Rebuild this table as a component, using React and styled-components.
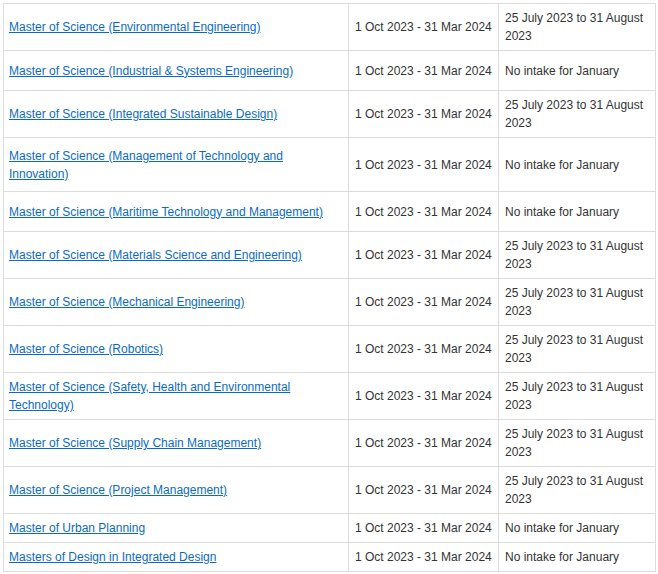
import React from 'react';
import styled, {createGlobalStyle} from "styled-components";

const programmes = [
    {name: "Master of Science (Environmental Engineering)", intake: "25 July 2023 to 31 August 2023", h: 47},
    {name: "Master of Science (Industrial & Systems Engineering)", intake: "No intake for January", h: 40},
    {name: "Master of Science (Integrated Sustainable Design)", intake: "25 July 2023 to 31 August 2023", h: 47},
    {name: "Master of Science (Management of Technology and Innovation)", intake: "No intake for January", h: 54},
    {name: "Master of Science (Maritime Technology and Management)", intake: "No intake for January", h: 40},
    {name: "Master of Science (Materials Science and Engineering)", intake: "25 July 2023 to 31 August 2023", h: 47},
    {name: "Master of Science (Mechanical Engineering)", intake: "25 July 2023 to 31 August 2023", h: 47},
    {name: "Master of Science (Robotics)", intake: "25 July 2023 to 31 August 2023", h: 47},
    {name: "Master of Science (Safety, Health and Environmental Technology)", intake: "25 July 2023 to 31 August 2023", h: 47},
    {name: "Master of Science (Supply Chain Management)", intake: "25 July 2023 to 31 August 2023", h: 47},
    {name: "Master of Science (Project Management)", intake: "25 July 2023 to 31 August 2023", h: 47},
    {name: "Master of Urban Planning", intake: "No intake for January", h: 29},
    {name: "Masters of Design in Integrated Design", intake: "No intake for January", h: 29},
];

const App = () => {
    return (
        <>
            <GlobalStyle />
            <StyledPage>
                <StyledTable>
                    <colgroup>
                        <col style={{width: 345}} />
                        <col style={{width: 150}} />
                        <col style={{width: 157}} />
                    </colgroup>
                    <tbody>
                        {programmes.map((p, index) => (
                            <StyledRow key={index} $h={p.h}>
                                <StyledCell $first>
                                    <StyledLink href="#">{p.name}</StyledLink>
                                </StyledCell>
                                <StyledCell>1 Oct 2023 - 31 Mar 2024</StyledCell>
                                <StyledCell>{p.intake}</StyledCell>
                            </StyledRow>
                        ))}
                    </tbody>
                </StyledTable>
            </StyledPage>
        </>
    );
};

export default App;


const GlobalStyle = createGlobalStyle`
    body {
        margin: 0;
        background: #fff;
        font-family: "Liberation Sans", Arial, sans-serif;
    }
`;

const StyledPage = styled.div`
    padding: 3px 0 0 3px;
`;

const StyledTable = styled.table`
    width: 652px;
    table-layout: fixed;
    border-collapse: collapse;
    font-size: 12px;
    line-height: 18px;
    color: #333;
`;

const StyledRow = styled.tr`
    height: ${props => props.$h}px;
`;

const StyledCell = styled.td`
    border: 1px solid #ddd;
    padding: 5px 6px 5px ${props => props.$first ? 5 : 6}px;
    vertical-align: middle;
    text-align: left;
`;

const StyledLink = styled.a`
    color: #0b6bc4;
    text-decoration: underline;
`;
